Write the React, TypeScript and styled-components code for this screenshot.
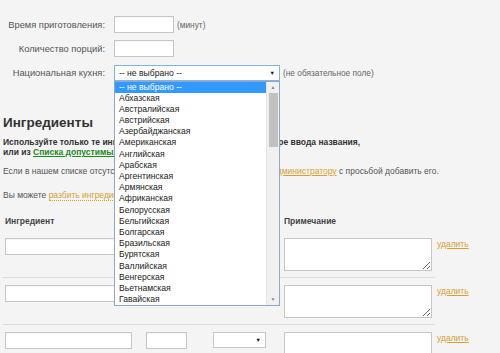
import React from "react";
import styled, { createGlobalStyle } from "styled-components";

const GlobalStyle = createGlobalStyle`
  html, body {
    margin: 0;
    padding: 0;
    background: #f4f4f4;
    font-family: "Liberation Sans", Arial, sans-serif;
    font-size: 8.5px;
    color: #555;
  }
`;

const Page = styled.div`
  position: relative;
  width: 500px;
  height: 353px;
  overflow: hidden;
  padding: 16px 0 0 3px;
  box-sizing: border-box;
`;

const FieldRow = styled.div`
  display: grid;
  grid-template-columns: 102px auto;
  column-gap: 9px;
  align-items: center;
  height: 17px;
  margin-bottom: 7px;
`;

const Label = styled.label`
  text-align: right;
  white-space: nowrap;
  font-size: 9.3px;
  color: #555;
`;

const FieldCell = styled.div`
  display: flex;
  align-items: center;
  gap: 3px;
`;

const TextBox = styled.div<{ w: number }>`
  width: ${(p) => p.w}px;
  height: 17px;
  box-sizing: border-box;
  background: #fff;
  border: 1px solid #c6c6c6;
  box-shadow: inset 0 1px 1px rgba(0, 0, 0, 0.04);
`;

const Hint = styled.span`
  font-size: 8.3px;
  white-space: nowrap;
  color: #666;
`;

const SelectWrap = styled.div`
  position: relative;
`;

const SelectBox = styled.div<{ w: number; focused?: boolean }>`
  width: ${(p) => p.w}px;
  height: 16px;
  box-sizing: border-box;
  background: #fff;
  border: 1px solid ${(p) => (p.focused ? "#7eb4ea" : "#c6c6c6")};
  display: flex;
  align-items: center;
  justify-content: space-between;
  padding: 0 4px 0 4px;
  font-size: 8.6px;
  color: #222;
`;

const Arrow = styled.span`
  font-size: 5.5px;
  color: #111;
`;

const DropList = styled.div`
  position: absolute;
  top: 16px;
  left: 0;
  width: 166px;
  height: 225px;
  box-sizing: border-box;
  background: #fff;
  border: 1px solid #8fa8c8;
  display: flex;
  z-index: 10;
`;

const Options = styled.ul`
  flex: 1;
  list-style: none;
  margin: 0;
  padding: 0;
  overflow: hidden;
`;

const Option = styled.li<{ active?: boolean }>`
  height: 11.2px;
  line-height: 11.2px;
  padding-left: 4px;
  font-size: 8.6px;
  white-space: nowrap;
  color: ${(p) => (p.active ? "#fff" : "#222")};
  background: ${(p) => (p.active ? "#3399ff" : "transparent")};
`;

const ScrollBar = styled.div`
  width: 12px;
  background: #f0f0f0;
  border-left: 1px solid #e4e4e4;
  display: flex;
  flex-direction: column;
  align-items: center;
`;

const ScrollBtn = styled.div`
  height: 11px;
  width: 100%;
  display: flex;
  align-items: center;
  justify-content: center;
  font-size: 5px;
  color: #888;
`;

const Thumb = styled.div`
  width: 9px;
  height: 54px;
  background: #c1c1c1;
`;

const Track = styled.div`
  flex: 1;
`;

const Heading = styled.h2`
  margin: 34px 0 7px;
  font-size: 13.5px;
  line-height: 15px;
  font-weight: bold;
  color: #333;
`;

const Lead = styled.p`
  margin: 0 0 9px;
  font-weight: bold;
  font-size: 8.5px;
  line-height: 10px;
  color: #333;
  white-space: nowrap;
`;

const Note = styled.p<{ gap: number }>`
  margin: 0 0 ${(p) => p.gap}px;
  font-size: 8.5px;
  line-height: 10px;
  color: #555;
  white-space: nowrap;
`;

const GreenLink = styled.a`
  color: #238a23;
  text-decoration: underline;
`;

const GoldLink = styled.a<{ dotted?: boolean }>`
  color: #d9a030;
  text-decoration: ${(p) => (p.dotted ? "none" : "underline")};
  border-bottom: ${(p) => (p.dotted ? "1px dotted #d9a030" : "none")};
`;

const IngTable = styled.div`
  margin-left: -1px;
  width: 433px;
`;

const IngRow = styled.div<{ header?: boolean; last?: boolean }>`
  display: grid;
  grid-template-columns: 130px 55px 79px 166px auto;
  align-items: start;
  padding: ${(p) => (p.header ? "0 0 5px" : "7px 0 6px")};
  border-bottom: ${(p) => (p.header || p.last ? "none" : "1px solid #dcdcdc")};
`;

const HeadCell = styled.div<{ pl: number }>`
  font-weight: bold;
  font-size: 8.5px;
  line-height: 10px;
  color: #444;
  white-space: nowrap;
  padding-left: ${(p) => p.pl}px;
`;

const Cell = styled.div<{ pl: number }>`
  padding-left: ${(p) => p.pl}px;
`;

const NoteBox = styled.textarea`
  display: block;
  width: 148px;
  height: 33px;
  box-sizing: border-box;
  border: 1px solid #c6c6c6;
  background: #fff;
  margin: 0;
  resize: vertical;
`;

const DelLink = styled(GoldLink)`
  display: inline-block;
  margin: 1px 0 0 5px;
  font-size: 8.5px;
`;

const cuisines = [
  "Абхазская",
  "Австралийская",
  "Австрийская",
  "Азербайджанская",
  "Американская",
  "Английская",
  "Арабская",
  "Аргентинская",
  "Армянская",
  "Африканская",
  "Белорусская",
  "Бельгийская",
  "Болгарская",
  "Бразильская",
  "Бурятская",
  "Валлийская",
  "Венгерская",
  "Вьетнамская",
  "Гавайская",
];

const IngredientRow = ({ last }: { last?: boolean }) => (
  <IngRow last={last}>
    <Cell pl={3}>
      <TextBox w={127} />
    </Cell>
    <Cell pl={14}>
      <TextBox w={41} />
    </Cell>
    <Cell pl={26}>
      <SelectBox w={53}>
        <span />
        <Arrow>▼</Arrow>
      </SelectBox>
    </Cell>
    <Cell pl={18}>
      <NoteBox />
    </Cell>
    <Cell pl={0}>
      <DelLink href="#">удалить</DelLink>
    </Cell>
  </IngRow>
);

export default function App() {
  return (
    <Page>
      <GlobalStyle />
      <FieldRow>
        <Label>Время приготовления:</Label>
        <FieldCell>
          <TextBox w={60} />
          <Hint>(минут)</Hint>
        </FieldCell>
      </FieldRow>
      <FieldRow>
        <Label>Количество порций:</Label>
        <FieldCell>
          <TextBox w={60} />
        </FieldCell>
      </FieldRow>
      <FieldRow>
        <Label>Национальная кухня:</Label>
        <FieldCell>
          <SelectWrap>
            <SelectBox w={166} focused>
              <span>-- не выбрано --</span>
              <Arrow>▼</Arrow>
            </SelectBox>
            <DropList>
              <Options>
                <Option active>-- не выбрано --</Option>
                {cuisines.map((c) => (
                  <Option key={c}>{c}</Option>
                ))}
              </Options>
              <ScrollBar>
                <ScrollBtn>▲</ScrollBtn>
                <Thumb />
                <Track />
                <ScrollBtn>▼</ScrollBtn>
              </ScrollBar>
            </DropList>
          </SelectWrap>
          <Hint>(не обязательное поле)</Hint>
        </FieldCell>
      </FieldRow>

      <Heading>Ингредиенты</Heading>
      <Lead>
        Используйте только те ингредиенты, которые появляются по мере ввода названия,
        <br />
        или из <GreenLink href="#">Списка допустимых ингредиентов</GreenLink>.
      </Lead>
      <Note gap={14}>
        Если в нашем списке отсутствует нужный ингредиент, обратитесь к{" "}
        <GoldLink href="#">администратору</GoldLink> с просьбой добавить его.
      </Note>
      <Note gap={16}>
        Вы можете <GoldLink href="#" dotted>разбить ингредиенты на группы</GoldLink>.
      </Note>

      <IngTable>
        <IngRow header>
          <HeadCell pl={3}>Ингредиент</HeadCell>
          <HeadCell pl={14}>Кол-во</HeadCell>
          <HeadCell pl={26}>Ед.</HeadCell>
          <HeadCell pl={18}>Примечание</HeadCell>
          <span />
        </IngRow>
        <IngredientRow />
        <IngredientRow />
        <IngredientRow last />
      </IngTable>
    </Page>
  );
}
